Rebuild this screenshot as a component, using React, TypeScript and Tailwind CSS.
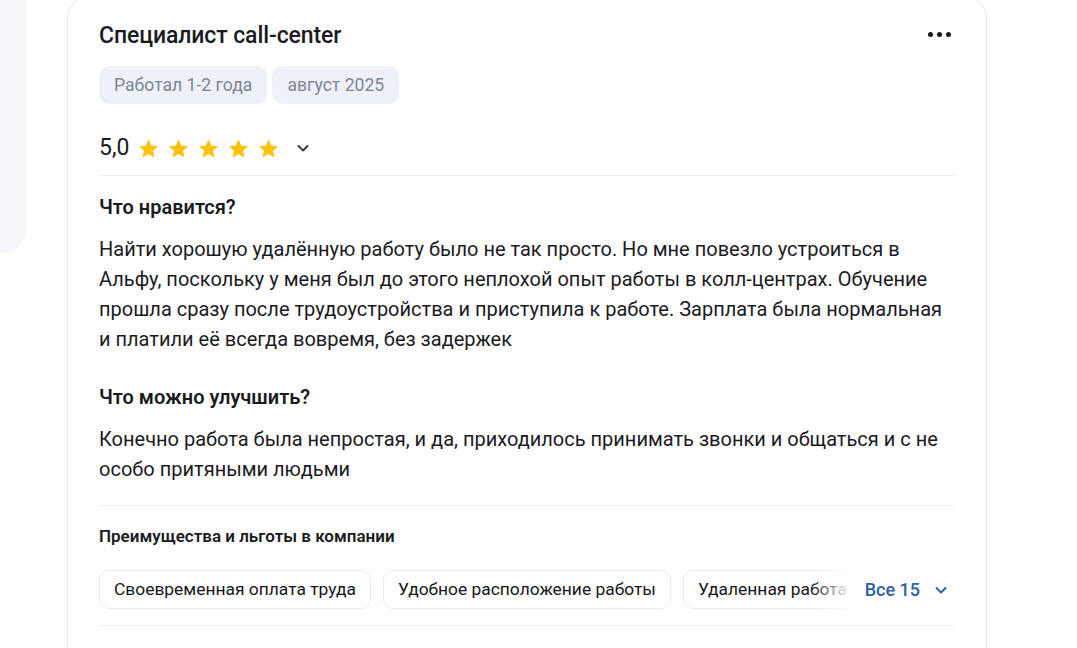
import React from 'react';

const Star = () => (
  <svg width="23" height="23" viewBox="0 0 24 24" className="shrink-0">
    <path
      d="M12 2.5l2.9 6.6 7.1.6-5.4 4.7 1.6 7-6.2-3.7-6.2 3.7 1.6-7L2 9.7l7.1-.6L12 2.5z"
      fill="#ffc107"
    />
  </svg>
);

const Chevron = ({ className = '' }: { className?: string }) => (
  <svg width="14" height="14" viewBox="0 0 14 14" className={className}>
    <path d="M2.5 5l4.5 4.5L11.5 5" fill="none" stroke="currentColor" strokeWidth="2" strokeLinecap="round" strokeLinejoin="round" />
  </svg>
);

const benefits = ['Своевременная оплата труда', 'Удобное расположение работы', 'Удаленная работа', 'ДМС'];

export default function App() {
  return (
    <div className="w-[1077px] h-[648px] overflow-hidden bg-white flex items-start gap-[41px] font-['Roboto',sans-serif] text-[#1b1b1f]">
      {/* left neighbour card */}
      <div className="w-[26px] h-[253px] shrink-0 bg-[#f5f6fa] rounded-br-[24px]"></div>

      {/* review card */}
      <div className="w-[920px] shrink-0 -mt-[5px] h-[700px] border border-[#e3e7ee] rounded-[24px] px-[31px] pt-[23px]">
        <div className="flex items-center justify-between h-[34px]">
          <h2 className="text-[23px] font-medium tracking-[-0.1px]">Специалист call-center</h2>
          <div className="flex gap-[4px] mr-[4px] -mt-[3px]">
            <span className="w-[5px] h-[5px] rounded-full bg-[#1b1b1f]"></span>
            <span className="w-[5px] h-[5px] rounded-full bg-[#1b1b1f]"></span>
            <span className="w-[5px] h-[5px] rounded-full bg-[#1b1b1f]"></span>
          </div>
        </div>

        <div className="flex gap-[5px] mt-[13px]">
          <span className="h-[38px] px-[15px] flex items-center rounded-[10px] bg-[#eef1f7] text-[17.6px] text-[#7b8699]">Работал 1-2 года</span>
          <span className="h-[38px] px-[15px] flex items-center rounded-[10px] bg-[#eef1f7] text-[17.6px] text-[#7b8699]">август 2025</span>
        </div>

        <div className="flex items-center mt-[26px] h-[36px]">
          <span className="text-[23px] mr-[8px]">5,0</span>
          <div className="flex gap-[7px]">
            <Star />
            <Star />
            <Star />
            <Star />
            <Star />
          </div>
          <Chevron className="ml-[16px] text-[#3c3c42]" />
        </div>

        <div className="border-t border-[#eceef2] mt-[9px]"></div>

        <h3 className="text-[20px] font-semibold mt-[18px] leading-[26px]">Что нравится?</h3>
        <p className="text-[20px] leading-[30px] mt-[14px]">
          Найти хорошую удалённую работу было не так просто. Но мне повезло устроиться в Альфу, поскольку у меня был до этого неплохой опыт работы в колл-центрах. Обучение прошла сразу после трудоустройства и приступила к работе. Зарплата была нормальная и платили её всегда вовремя, без задержек
        </p>

        <h3 className="text-[20px] font-semibold mt-[30px] leading-[26px]">Что можно улучшить?</h3>
        <p className="text-[20px] leading-[30px] mt-[14px]">
          Конечно работа была непростая, и да, приходилось принимать звонки и общаться и с не особо притяными людьми
        </p>

        <div className="border-t border-[#eceef2] mt-[21px]"></div>

        <h4 className="text-[17px] font-semibold mt-[19px] leading-[22px]">Преимущества и льготы в компании</h4>

        <div className="flex items-center mt-[23px]">
          <div className="relative flex-1 overflow-hidden">
            <div className="flex gap-[12px] w-max">
              {benefits.map((b) => (
                <span key={b} className="h-[39px] px-[14px] flex items-center rounded-[10px] border border-[#e8ebf2] text-[17.4px] text-[#16161a] whitespace-nowrap">
                  {b}
                </span>
              ))}
            </div>
            <div className="absolute right-0 top-0 h-full w-[40px] bg-gradient-to-r from-white/0 to-white"></div>
          </div>
          <button className="flex items-center gap-[14px] pl-[14px] pr-[7px] text-[18px] font-medium text-[#2f5fa8] whitespace-nowrap">
            Все 15
            <Chevron className="text-[#2f5fa8]" />
          </button>
        </div>

        <div className="border-t border-[#eceef2] mt-[16px]"></div>
      </div>
    </div>
  );
}
